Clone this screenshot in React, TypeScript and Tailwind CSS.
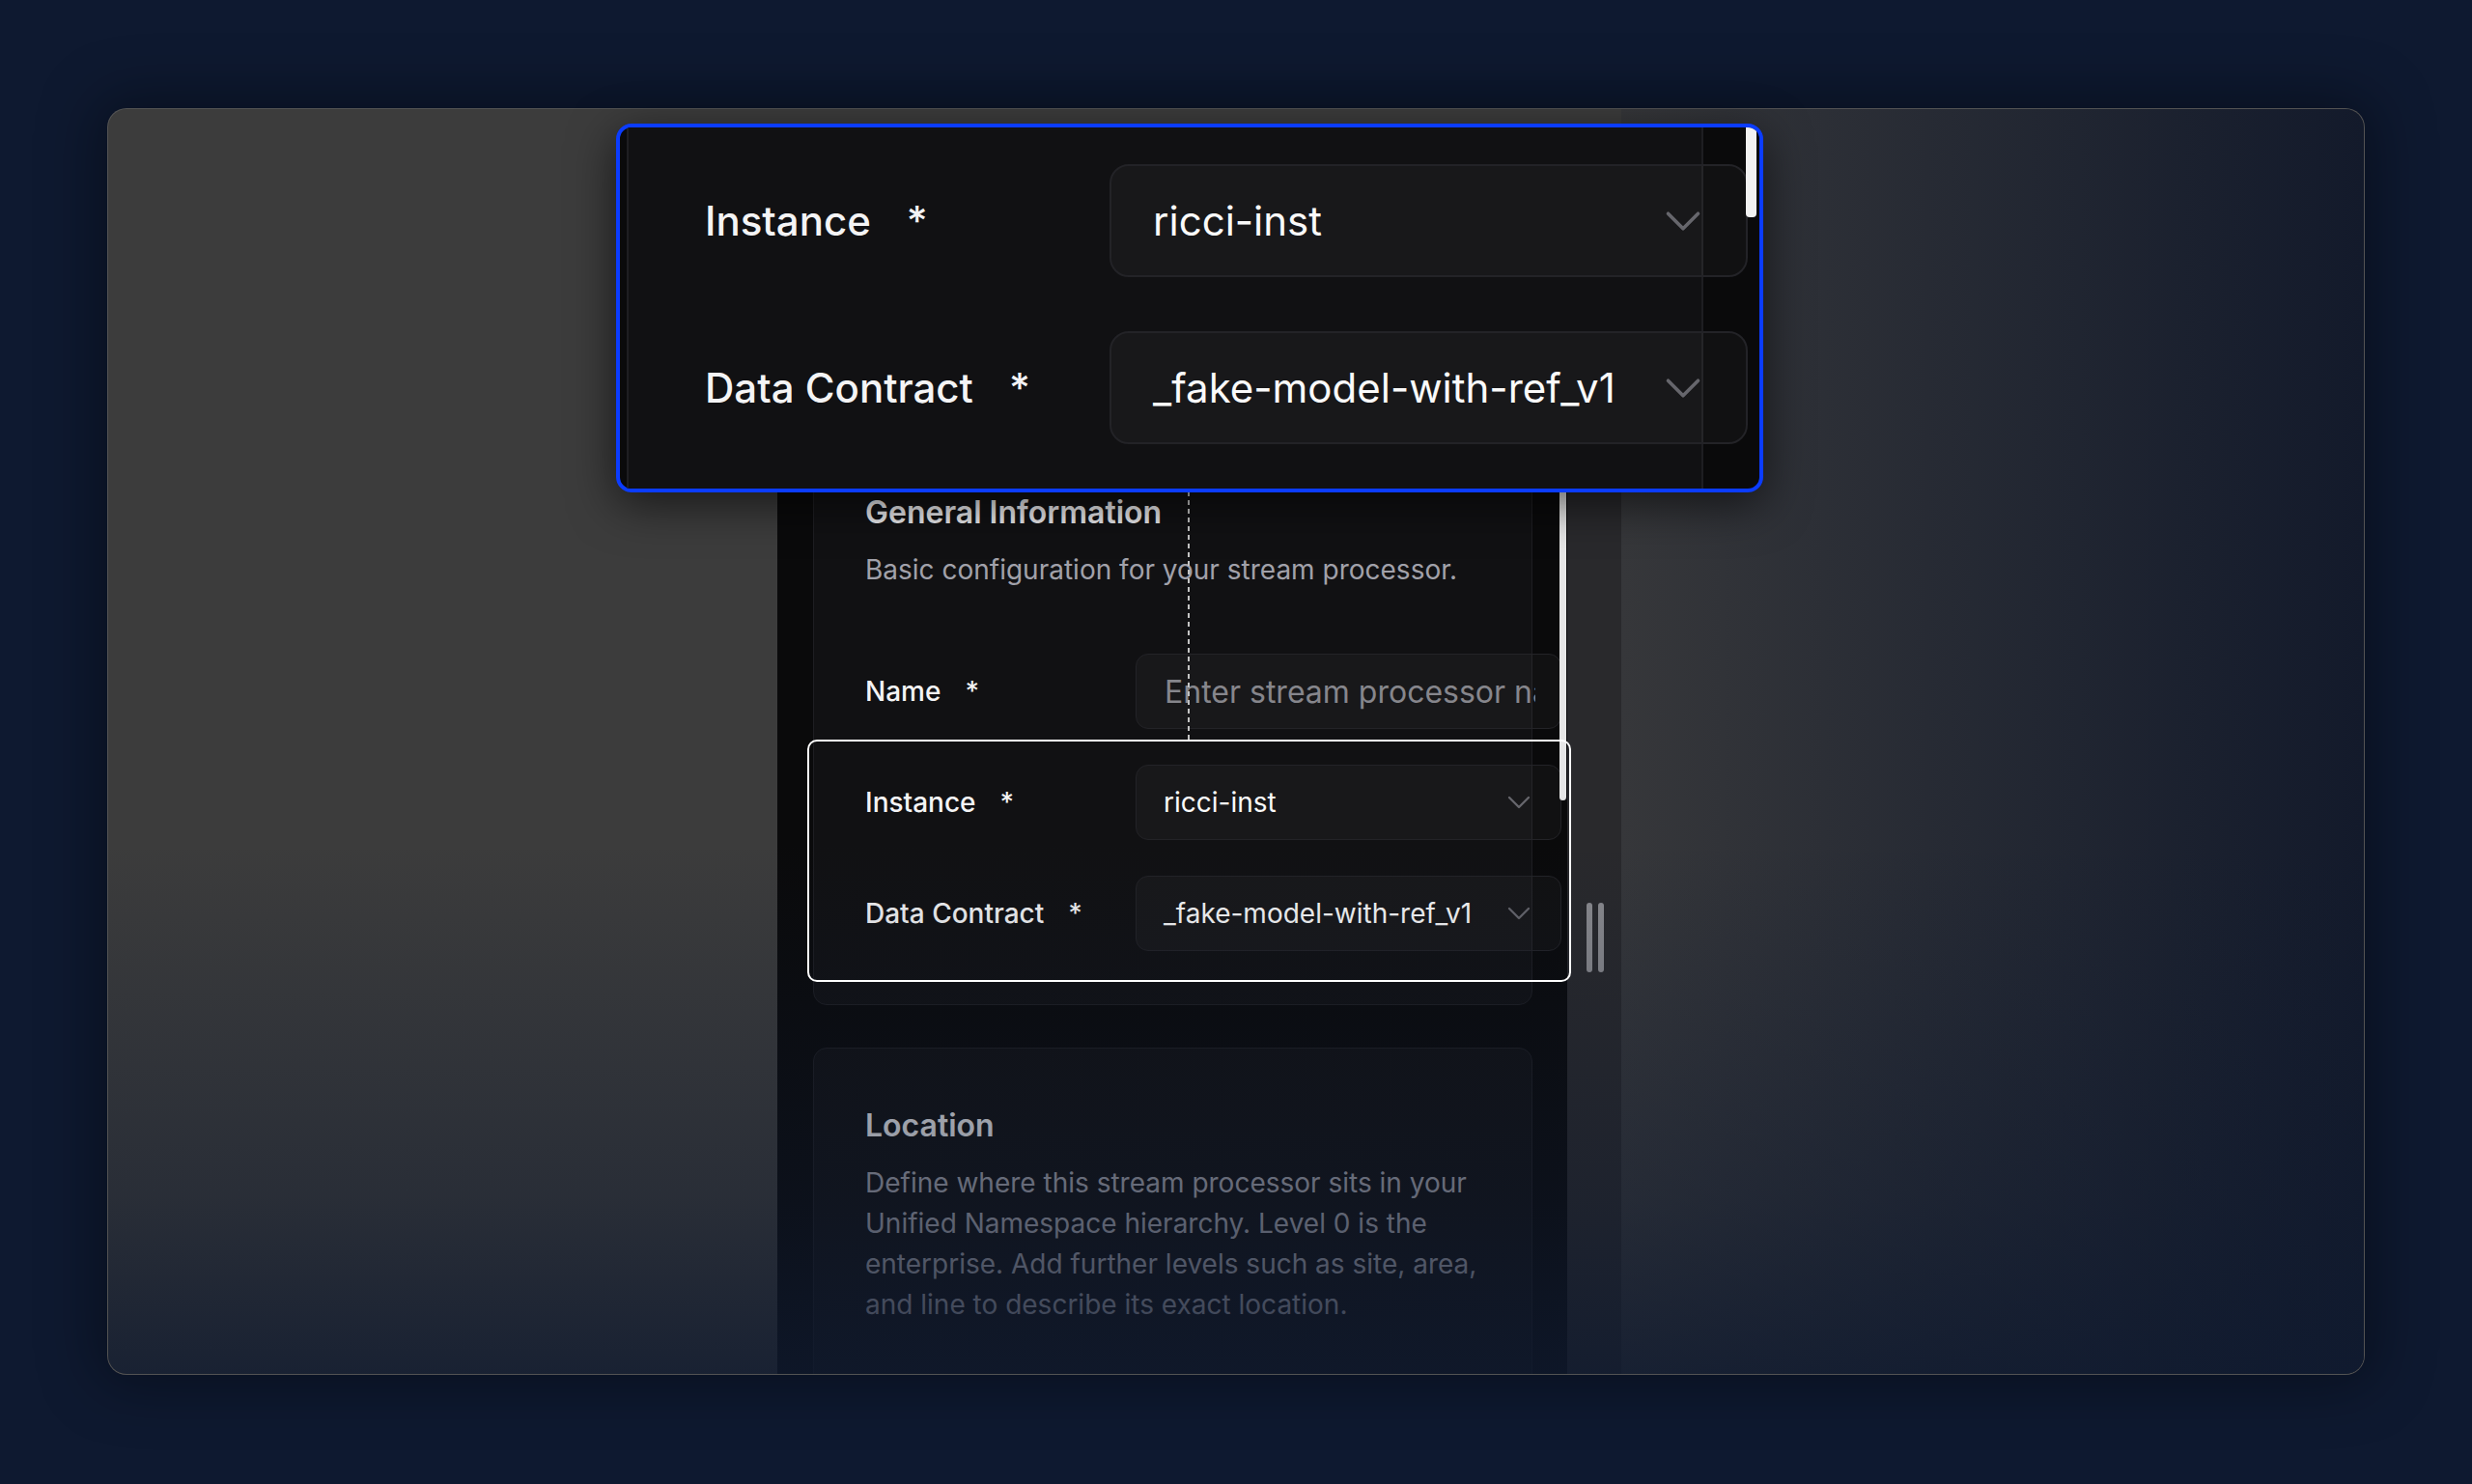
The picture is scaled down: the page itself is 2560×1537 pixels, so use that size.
import { ChevronDown } from 'lucide-react';

type RowSize = 'sm' | 'lg';

type FieldRow = {
  label: string;
  value?: string;
  placeholder?: string;
  select?: boolean;
};

const GENERAL_ROWS: FieldRow[] = [
  { label: 'Name', placeholder: 'Enter stream processor name' },
  { label: 'Instance', value: 'ricci-inst', select: true },
  { label: 'Data Contract', value: '_fake-model-with-ref_v1', select: true },
];

// the lens shows the highlighted rows at 1.5x
const ZOOMED_ROWS = GENERAL_ROWS.slice(1);

function Row({ row, size }: { row: FieldRow; size: RowSize }) {
  const lg = size === 'lg';

  return (
    <div className={lg ? 'flex h-[117px] shrink-0 items-center' : 'flex h-[78px] shrink-0 items-center'}>
      <label
        className={
          lg
            ? 'flex w-[419px] shrink-0 items-center text-[42px] font-medium text-[#f4f4f5]'
            : 'flex w-[280px] shrink-0 items-center text-[28px] font-medium text-[#f4f4f5]'
        }
      >
        {row.label}
        <span className={lg ? 'ml-[37px]' : 'ml-[25px]'}>*</span>
      </label>

      {row.select ? (
        <div
          className={
            lg
              ? 'flex h-full w-[661px] shrink-0 items-center justify-between rounded-[20px] border-[2px] border-[#232327] bg-white/[0.03] pl-[43px] pr-[34px]'
              : 'flex h-full w-[441px] shrink-0 items-center justify-between rounded-[13px] border border-[#232327] bg-white/[0.03] pl-[28px] pr-[23px]'
          }
        >
          <span className={lg ? 'text-[42px] text-[#fafafa]' : 'text-[28px] text-[#fafafa]'}>{row.value}</span>
          <ChevronDown size={lg ? 62 : 40} strokeWidth={1.4} className="shrink-0 text-[#66666c]" />
        </div>
      ) : (
        <input
          readOnly
          placeholder={row.placeholder}
          className="h-full w-[441px] shrink-0 rounded-[13px] border border-[#232327] bg-white/[0.03] pl-[29px] pr-[26px] text-[32px] text-[#fafafa] outline-none placeholder:text-[#86868c]"
        />
      )}
    </div>
  );
}

function ZoomLens() {
  return (
    <div className="absolute left-[638px] top-[128px] h-[382px] w-[1188px] overflow-hidden rounded-[16px] border-[4px] border-[#0b3cff] bg-[#0a0a0b] shadow-[0_12px_48px_rgba(0,0,0,0.6)]">
      <div className="ml-[7px] h-full w-[1115px] border-x-[2px] border-[#1e1e22] bg-[#111113] pl-[79px] pt-[38px]">
        <div className="flex flex-col gap-[56px]">
          {ZOOMED_ROWS.map((row) => (
            <Row key={row.label} row={row} size="lg" />
          ))}
        </div>
      </div>
      <div className="absolute right-[3px] top-0 h-[93px] w-[11px] rounded-b-[4px] bg-[#f2f2f2]" />
    </div>
  );
}

export default function App() {
  return (
    <div className="relative h-[1537px] w-full overflow-hidden bg-[#0e1930] px-[111px] pt-[112px] font-['Inter','Noto_Sans',sans-serif]">
      <div className="relative flex h-[1312px] overflow-hidden rounded-[20px] border border-white/[0.12] bg-[#3c3c3c] shadow-[0_0_60px_12px_rgba(0,0,0,0.35)]">
        <div className="w-[693px] shrink-0" />

        <div className="relative mt-[20px] w-[818px] shrink-0 bg-[#0a0a0b] pl-[37px] pr-[36px] pt-[317px]">
          <section className="rounded-[14px] border border-[#1e1e22] bg-[#111113] px-[53px] pb-[55px] pt-[56px]">
            <h2 className="text-[32px] font-semibold leading-[48px] text-[#e8e8eb]">General Information</h2>
            <p className="mt-[14px] text-[28px] leading-[42px] text-[#a1a1aa]">
              Basic configuration for your stream processor.
            </p>
            <div className="mt-[66px] flex flex-col gap-[37px]">
              {GENERAL_ROWS.map((row) => (
                <Row key={row.label} row={row} size="sm" />
              ))}
            </div>
          </section>

          <section className="mt-[44px] rounded-[14px] border border-[#1e1e22] bg-[#111113] px-[53px] pb-[90px] pt-[56px]">
            <h2 className="text-[32px] font-semibold leading-[48px] text-[#e4e4e7]">Location</h2>
            <p className="mt-[14px] w-[652px] text-[28px] leading-[42px] text-[#a1a1aa]">
              Define where this stream processor sits in your Unified Namespace hierarchy. Level 0 is the
              enterprise. Add further levels such as site, area, and line to describe its exact location.
            </p>
          </section>

          {/* scrollbar */}
          <div className="absolute right-[1px] top-[210px] h-[486px] w-[7px] rounded-full bg-[#e6e6e6]" />
        </div>

        <div className="mt-[20px] flex w-[56px] shrink-0 gap-[6px] bg-[#29292c] pl-[20px] pt-[802px]">
          <div className="h-[72px] w-[6px] rounded-full bg-[#8c8c90]" />
          <div className="h-[72px] w-[6px] rounded-full bg-[#8c8c90]" />
        </div>

        <div className="flex-1 bg-linear-to-r from-[#36373a] to-[#131a2b]" />

        <div className="pointer-events-none absolute inset-0 bg-[linear-gradient(to_bottom,transparent_58%,rgba(15,26,48,0.42)_86%,rgba(15,26,48,0.78)_100%)]" />
      </div>

      {/* guide + highlight drawn over the form */}
      <div className="absolute left-[1230px] top-[509px] h-[257px] w-[2px] bg-[repeating-linear-gradient(to_bottom,#c4c4c4_0_5px,transparent_5px_9px)]" />
      <div className="absolute left-[836px] top-[766px] h-[251px] w-[791px] rounded-[10px] border-2 border-white" />

      <ZoomLens />
    </div>
  );
}
